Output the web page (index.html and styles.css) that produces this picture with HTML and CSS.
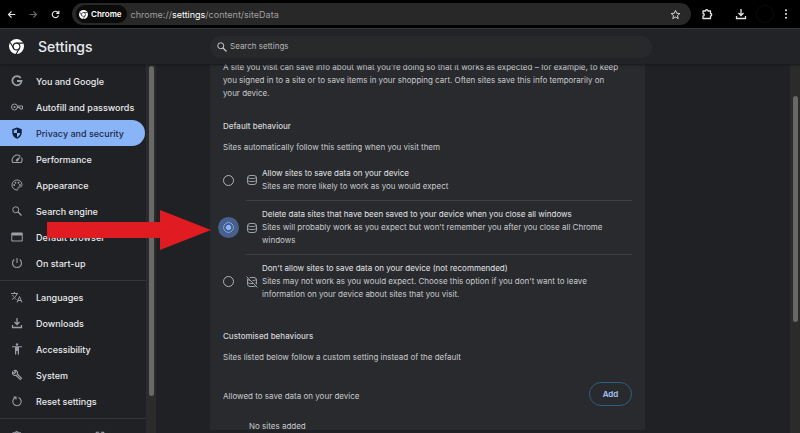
FILE: index.html
```html
<!DOCTYPE html>
<html lang="en">
<head>
    <meta charset="UTF-8">
    <title>Settings - On-device site data</title>
    <link rel="stylesheet" href="styles.css">
</head>
<body>
    <!-- shared symbols -->
    <svg class="defs" aria-hidden="true">
        <symbol id="chrome" viewBox="0 0 24 24">
            <circle cx="12" cy="12" r="12" fill="#fff"/>
            <g fill="none" stroke="#202124" stroke-width="1.8">
                <circle cx="12" cy="12" r="5.4"/>
                <path d="M12 6.600h10.600M7.300 14.700L2 5.500M16.700 14.700L11.400 23.900"/>
            </g>
        </symbol>
        <symbol id="search" viewBox="0 0 24 24">
            <circle cx="9.500" cy="9.500" r="6" fill="none" stroke="currentColor" stroke-width="2"/>
            <path d="M14 14l7 7" stroke="currentColor" stroke-width="2.400"/>
        </symbol>
        <symbol id="database" viewBox="0 0 24 24">
            <g fill="none" stroke="currentColor" stroke-width="2">
                <rect x="3" y="3" width="18" height="18" rx="5"/>
                <path d="M3 7c3 3 15 3 18 0M3 13c3 3 15 3 18 0"/>
            </g>
        </symbol>
        <symbol id="puzzle" viewBox="0 0 24 24">
            <path d="M4 6h5a2.500 2.500 0 0 1 5 0h5v5a2.500 2.500 0 0 1 0 5v5H4v-5a2.500 2.500 0 0 0 0-5z" fill="none" stroke="currentColor" stroke-width="2.600" stroke-linejoin="round"/>
        </symbol>
        <symbol id="download" viewBox="0 0 24 24">
            <path d="M12 2v13M7 10l5 5 5-5M3 16v5h18v-5" fill="none" stroke="currentColor" stroke-width="2.600"/>
        </symbol>
    </svg>

    <div class="toolbar">
        <button class="tool" aria-label="Back"><svg viewBox="0 0 24 24"><path d="M22 12H4M12 4l-8 8 8 8" fill="none" stroke="currentColor" stroke-width="3"/></svg></button>
        <button class="tool dim" aria-label="Forward"><svg viewBox="0 0 24 24"><path d="M2 12h18M12 4l8 8-8 8" fill="none" stroke="currentColor" stroke-width="3"/></svg></button>
        <button class="tool" aria-label="Reload"><svg viewBox="0 0 24 24"><path d="M20 14.500A8.500 8.500 0 1 1 18 6l3 3M21 2v7h-7" fill="none" stroke="currentColor" stroke-width="3"/></svg></button>
        <div class="address">
            <span class="chip"><svg><use href="#chrome"/></svg>Chrome</span>
            <span class="url">chrome://<b>settings</b>/content/siteData</span>
            <button class="star" aria-label="Bookmark"><svg viewBox="0 0 24 24"><path d="M12 3l2.700 6.300 6.800.6-5.200 4.500 1.600 6.600-5.900-3.500L6.100 21l1.600-6.600L2.500 9.900l6.800-.6z" fill="none" stroke="currentColor" stroke-width="2"/></svg></button>
        </div>
        <div class="actions">
            <button class="tool" aria-label="Extensions"><svg><use href="#puzzle"/></svg></button>
            <button class="tool" aria-label="Downloads"><svg><use href="#download"/></svg></button>
            <span class="avatar"></span>
            <button class="tool menu" aria-label="Menu"><svg viewBox="0 0 24 24"><g fill="currentColor"><circle cx="12" cy="3" r="2.500"/><circle cx="12" cy="12" r="2.500"/><circle cx="12" cy="21" r="2.500"/></g></svg></button>
        </div>
    </div>

    <header class="header">
        <div class="brand">
            <svg><use href="#chrome"/></svg>
            <h1>Settings</h1>
        </div>
        <label class="search">
            <svg><use href="#search"/></svg>
            <input type="search" placeholder="Search settings" aria-label="Search settings">
        </label>
    </header>

    <div class="body">
        <nav class="sidebar">
            <div class="group">
                <a class="item" href="#"><svg viewBox="0 0 24 24"><path d="M19.500 6A9.200 9.200 0 1 0 21.200 12H12" fill="none" stroke="currentColor" stroke-width="3.600"/></svg>You and Google</a>
                <a class="item" href="#"><svg viewBox="0 0 24 24"><g fill="none" stroke="currentColor" stroke-width="2"><circle cx="7" cy="12" r="6"/><path d="M13 10h10v6h-5v-3h-5"/></g><circle cx="7" cy="12" r="2.200" fill="currentColor"/></svg>Autofill and passwords</a>
                <a class="item selected" href="#"><svg viewBox="0 0 24 24"><path d="M12 1l9.500 3.500V11c0 6-4 10.500-9.500 12.500C6.500 21.500 2.500 17 2.500 11V4.500z" fill="#10203c"/><path d="M12 4.500V12H5.500V6.500zM12 12h6.500c-.5 4-3 7-6.500 8.500z" fill="#8ab4f8"/></svg>Privacy and security</a>
                <a class="item" href="#"><svg viewBox="0 0 24 24"><path d="M18.500 6.500A10 10 0 0 0 3.500 19h17a10 10 0 0 0 .5-10" fill="none" stroke="currentColor" stroke-width="2.200"/><path d="M20 6l-6 10a2.200 2.200 0 0 1-4-3z" fill="currentColor"/></svg>Performance</a>
                <a class="item" href="#"><svg viewBox="0 0 24 24"><path d="M12 2a10 10 0 0 0 0 20c2 0 2.500-1.500 1.800-2.800-.8-1.700.2-3.200 2.200-3.200h2.500c2 0 3.500-2 3.500-4.500C22 6 17.500 2 12 2z" fill="none" stroke="currentColor" stroke-width="2"/><g fill="currentColor"><circle cx="6.500" cy="12" r="1.800"/><circle cx="9" cy="7.500" r="1.800"/><circle cx="15" cy="7.500" r="1.800"/><circle cx="18" cy="12" r="1.800"/></g></svg>Appearance</a>
                <a class="item" href="#"><svg><use href="#search"/></svg>Search engine</a>
                <a class="item" href="#"><svg viewBox="0 0 24 24"><path d="M1.500 4h21v16h-21z" fill="none" stroke="currentColor" stroke-width="2"/><path d="M2 4h20v5H2z" fill="currentColor"/></svg>Default browser</a>
                <a class="item" href="#"><svg viewBox="0 0 24 24"><path d="M12 2v10M6.500 5a9 9 0 1 0 11 0" fill="none" stroke="currentColor" stroke-width="2.200"/></svg>On start-up</a>
            </div>
            <div class="group">
                <a class="item" href="#"><svg viewBox="0 0 24 24"><path d="M0 5h14M7 2v3M12 5c-1 5-5 9-10 12M3 8c2 4 5 7 8 9M12 23l5-12 5 12M14 19h6" fill="none" stroke="currentColor" stroke-width="2"/></svg>Languages</a>
                <a class="item" href="#"><svg><use href="#download"/></svg>Downloads</a>
                <a class="item" href="#"><svg viewBox="0 0 24 24"><g fill="currentColor"><circle cx="12" cy="3" r="2.400"/><path d="M2 6.500h20v2.200h-6V23h-2.500v-7h-3v7H8V8.700H2z"/></g></svg>Accessibility</a>
                <a class="item" href="#"><svg viewBox="0 0 24 24"><path d="M12.500 10l8.500 8.500-2.500 2.500-8.500-8.500C6 14 2 11 3 6l4 3 2.500-2.500L6.500 3c5-1 8 3 6 7z" fill="none" stroke="currentColor" stroke-width="2.200"/></svg>System</a>
                <a class="item" href="#"><svg viewBox="0 0 24 24"><path d="M9 5a8.500 8.500 0 1 0 6 0M5 4h5v5" fill="none" stroke="currentColor" stroke-width="2.200"/></svg>Reset settings</a>
            </div>
            <div class="group last">
                <a class="item" href="#" aria-label="Extensions"><svg><use href="#puzzle"/></svg><svg class="launch" viewBox="0 0 24 24"><path d="M10 3H3v18h18v-7M14 3h7v7M21 3L10 14" fill="none" stroke="currentColor" stroke-width="2.500"/></svg></a>
            </div>
        </nav>
        <div class="track"><div class="thumb"></div></div>

        <main class="content">
            <section class="card">
                <p class="intro">A site you visit can save info about what you're doing so that it works as expected – for example, to keep you signed in to a site or to save items in your shopping cart. Often sites save this info temporarily on your device.</p>

                <h2>Default behaviour</h2>
                <p>Sites automatically follow this setting when you visit them</p>
                <div class="options">
                    <div class="option">
                        <input type="radio" name="data" id="allow">
                        <label for="allow">
                            <svg><use href="#database"/></svg>
                            <span><strong>Allow sites to save data on your device</strong>Sites are more likely to work as you would expect</span>
                        </label>
                    </div>
                    <div class="option">
                        <input type="radio" name="data" id="delete" checked>
                        <label for="delete">
                            <svg><use href="#database"/></svg>
                            <span><strong>Delete data sites that have been saved to your device when you close all windows</strong>Sites will probably work as you expect but won't remember you after you close all Chrome windows</span>
                        </label>
                    </div>
                    <div class="option">
                        <input type="radio" name="data" id="block">
                        <label for="block">
                            <svg viewBox="0 0 24 24"><use href="#database"/><path d="M3 1l20 20" stroke="#292a2d" stroke-width="3"/><path d="M1 1l22 22" stroke="currentColor" stroke-width="2"/></svg>
                            <span><strong>Don't allow sites to save data on your device (not recommended)</strong>Sites may not work as you would expect. Choose this option if you don't want to leave information on your device about sites that you visit.</span>
                        </label>
                    </div>
                </div>

                <h2>Customised behaviours</h2>
                <p>Sites listed below follow a custom setting instead of the default</p>
                <div class="list-head">
                    <span>Allowed to save data on your device</span>
                    <button class="add">Add</button>
                </div>
                <p class="empty">No sites added</p>
            </section>
        </main>
        <div class="track page"><div class="thumb"></div></div>
    </div>

    <svg class="arrow" viewBox="0 0 164 40" aria-hidden="true"><path d="M0 12h113V0l51 20-51 20V28H0z" fill="#e11b22"/></svg>
</body>
</html>
```
FILE: styles.css
```css
* {
    box-sizing: border-box;
    margin: 0;
    padding: 0;
}

body {
    display: flex;
    flex-direction: column;
    height: 100vh;
    overflow: hidden;
    position: relative;
    background: #202124;
    color: #c8cbce;
    font: 8px/13px Inter, "Liberation Sans", sans-serif;
}

button {
    border: 0;
    background: none;
    color: inherit;
    font: inherit;
}

svg {
    display: block;
    flex: none;
    width: 12px;
    height: 12px;
}

.defs {
    position: absolute;
    width: 0;
    height: 0;
}

/* browser toolbar */
.toolbar {
    display: flex;
    align-items: center;
    flex: none;
    height: 28px;
    padding-right: 8px;
    background: #000;
    color: #e3e3e3;
}
.tool {
    display: flex;
    justify-content: center;
    width: 22px;
}
.tool svg {
    width: 9px;
    height: 9px;
}
.dim {
    color: #6a6a6a;
}
.address {
    display: flex;
    align-items: center;
    flex: 1;
    height: 22px;
    margin-left: 6px;
    padding: 0 10px 0 4px;
    border-radius: 11px;
    background: #282828;
}
.chip {
    display: flex;
    align-items: center;
    gap: 3px;
    height: 18px;
    padding: 0 5px 0 3px;
    border-radius: 9px;
    background: #0b0b0b;
    color: #fff;
    font-weight: 600;
}
.chip svg {
    width: 9px;
    height: 9px;
}
.url {
    flex: 1;
    padding-left: 4px;
    color: #a0a0a0;
    font-size: 9px;
}
.url b {
    color: #fff;
    font-weight: 400;
}
.star svg {
    width: 11px;
    height: 11px;
}
.actions {
    display: flex;
    align-items: center;
    gap: 12px;
    padding-left: 5px;
}
.actions svg {
    width: 12px;
    height: 12px;
}
.actions .menu {
    width: 12px;
    margin-left: -6px;
}
.menu svg {
    width: 10px;
    height: 10px;
}
.avatar {
    width: 18px;
    height: 18px;
    margin-left: -8px;
    border: 1px solid #0d0d0d;
    border-radius: 50%;
}

/* settings header */
.header {
    display: flex;
    align-items: center;
    flex: none;
    height: 36px;
    padding-right: 148px;
    border-top: 1px solid #38393c;
    background: #222327;
    box-shadow: 0 1px 2px #17181a;
    position: relative;
    z-index: 1;
}
.brand {
    display: flex;
    align-items: center;
    gap: 14px;
    width: 210px;
    padding-left: 9px;
}
.brand svg {
    width: 15px;
    height: 15px;
}
.brand h1 {
    color: #e8eaed;
    font-size: 14px;
    font-weight: 500;
}
.search {
    display: flex;
    align-items: center;
    flex: 1;
    gap: 2px;
    height: 22px;
    padding: 0 6px;
    border-radius: 11px;
    background: #28292b;
}
.search input {
    flex: 1;
    border: 0;
    outline: 0;
    background: none;
    color: #c4c7ca;
    font: inherit;
}
.search input::placeholder {
    color: #b4b7ba;
}

/* sidebar */
.body {
    display: flex;
    flex: 1;
    min-height: 0;
}
.sidebar {
    width: 146px;
    padding-top: 4px;
    overflow: hidden;
}
.group {
    padding-bottom: 4px;
    margin-bottom: 3px;
    border-bottom: 1px solid #35363a;
}
.last {
    padding-top: 1px;
}
.item {
    display: flex;
    align-items: center;
    gap: 13px;
    height: 26px;
    margin-right: 1px;
    padding-left: 11px;
    color: #e8eaed;
    font-size: 9px;
    font-weight: 500;
    text-decoration: none;
}
.item svg {
    color: #9aa0a6;
}
.item .launch {
    width: 10px;
    height: 10px;
    margin: 0 40px 0 auto;
}
.selected {
    border-radius: 0 13px 13px 0;
    background: #8ab4f8;
    color: #1c2b48;
}

/* scrollbars */
.track {
    flex: none;
    width: 10px;
    padding: 2px 2px 0 3px;
    background: #2b2b2c;
}
.thumb {
    height: 90%;
    border-radius: 3px;
    background: #686868;
}
.page {
    padding: 32px 2px 0 3px;
}
.page .thumb {
    height: 67%;
}

/* content */
.content {
    flex: 1;
    min-width: 0;
    padding: 0 145px 0 54px;
}
.card {
    height: 100%;
    padding: 0 13px;
    background: #292a2d;
}
.intro {
    margin-top: -3px;
    padding-right: 11px;
}
.card h2 {
    margin: 20px 0 8px;
    color: #d2d4d7;
    font-size: 8px;
    font-weight: 500;
}
.options {
    padding-top: 6px;
}
.option {
    display: flex;
    align-items: center;
    gap: 13px;
}
.option label {
    display: flex;
    align-items: center;
    flex: 1;
    gap: 4px;
    padding: 7px 4px 7px 0;
}
.option + .option label {
    border-top: 1px solid #3f4044;
}
.option svg {
    color: #9aa0a6;
}
.option strong {
    display: block;
    color: #e2e4e7;
    font-weight: 400;
}
.option input {
    flex: none;
    appearance: none;
    width: 11px;
    height: 11px;
    margin-right: -1px;
    border: 1px solid #b0b3b7;
    border-radius: 50%;
}
.option input:checked {
    border-color: #8ab4f8;
    background: radial-gradient(#8ab4f8 35%, #47608d 45%);
    box-shadow: 0 0 0 5px #47608d;
}
.options + h2 {
    margin-top: 22px;
}
.list-head {
    display: flex;
    align-items: center;
    justify-content: space-between;
    margin-top: 18px;
}
.list-head span {
    padding-top: 4px;
}
.add {
    width: 43px;
    height: 24px;
    border: 1px solid #2c5f80;
    border-radius: 12px;
    color: #a8c7fa;
    font-weight: 600;
}
.empty {
    padding: 14px 26px;
}

.arrow {
    position: absolute;
    left: 47px;
    top: 210px;
    z-index: 2;
    width: 164px;
    height: 40px;
}
```
